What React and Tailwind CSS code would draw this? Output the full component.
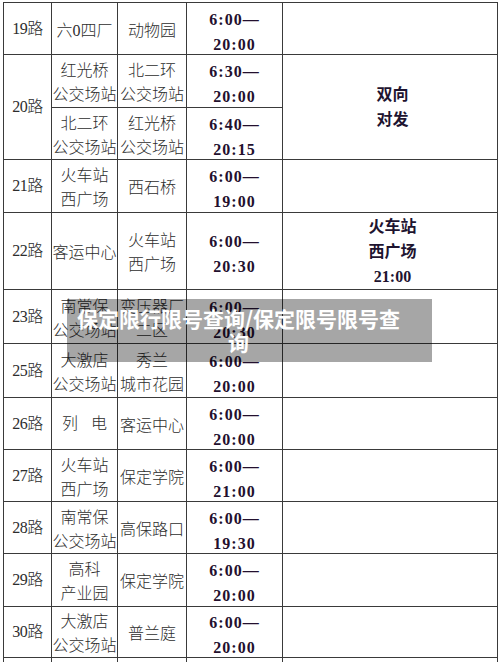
import React from "react";

const rows = [
  { no: "19路", from: ["六0四厂"], to: ["动物园"], time: ["6:00—", "20:00"], h: 52 },
  { no: "20路", from: ["红光桥", "公交场站"], to: ["北二环", "公交场站"], time: ["6:30—", "20:00"], h: 53, span: true, note: ["双向", "对发"] },
  { from: ["北二环", "公交场站"], to: ["红光桥", "公交场站"], time: ["6:40—", "20:15"], h: 52, sub: true },
  { no: "21路", from: ["火车站", "西广场"], to: ["西石桥"], time: ["6:00—", "19:00"], h: 53 },
  { no: "22路", from: ["客运中心"], to: ["火车站", "西广场"], time: ["6:00—", "20:30"], h: 77, note: ["火车站", "西广场", "21:00"] },
  { no: "23路", from: ["南常保", "公交场站"], to: ["变压器厂", "二区"], time: ["6:00—", "20:30"], h: 54 },
  { no: "25路", from: ["大激店", "公交场站"], to: ["秀兰", "城市花园"], time: ["6:00—", "20:00"], h: 54 },
  { no: "26路", from: ["列", "电"], spread: true, to: ["客运中心"], time: ["6:00—", "20:00"], h: 52 },
  { no: "27路", from: ["火车站", "西广场"], to: ["保定学院"], time: ["6:00—", "21:00"], h: 52 },
  { no: "28路", from: ["南常保", "公交场站"], to: ["高保路口"], time: ["6:00—", "19:30"], h: 52 },
  { no: "29路", from: ["高科", "产业园"], to: ["保定学院"], time: ["6:00—", "20:00"], h: 53 },
  { no: "30路", from: ["大激店", "公交场站"], to: ["普兰庭"], time: ["6:00—", "20:00"], h: 51 },
  { no: "31路", from: ["火车站", "西广场"], to: ["保定学院"], time: ["6:00—", "20:00"], h: 52 },
];

const cell = "border border-[#3a3a3a] p-0 text-center align-middle";

const Lines = ({ items }) => (
  <div className="flex flex-col items-center leading-[24px] translate-y-[2px]">
    {items.map((t, i) => (
      <span key={i} className="whitespace-nowrap">{t}</span>
    ))}
  </div>
);

const Time = ({ items }) => (
  <div
    className="flex flex-col items-center leading-[25px] translate-y-[3px] font-bold text-[16px] text-[#23102e] tracking-[1px]"
    style={{ fontFamily: '"Liberation Serif", serif' }}
  >
    {items.map((t, i) => (
      <span key={i} className="whitespace-nowrap">{t}</span>
    ))}
  </div>
);

export default function App() {
  return (
    <div
      className="relative h-[662px] w-[500px] overflow-hidden bg-white text-[16px] font-light text-[#2d2d2d]"
      style={{ fontFamily: '"Liberation Serif", "Noto Sans CJK SC", sans-serif' }}
    >
      <table className="mt-[2px] ml-[3px] border-collapse table-fixed w-[494px]">
        <colgroup>
          <col className="w-[48px]" />
          <col className="w-[66px]" />
          <col className="w-[69px]" />
          <col className="w-[96px]" />
          <col className="w-[215px]" />
        </colgroup>
        <tbody>
          {rows.map((r, i) => (
            <tr key={i} style={{ height: r.h }}>
              {!r.sub && (
                <td className={cell} rowSpan={r.span ? 2 : 1}>
                  <span className="tracking-[-0.5px]">{r.no}</span>
                </td>
              )}
              <td className={cell}>
                {r.spread ? (
                  <div className="flex justify-between px-[10px]">
                    <span>{r.from[0]}</span>
                    <span>{r.from[1]}</span>
                  </div>
                ) : (
                  <Lines items={r.from} />
                )}
              </td>
              <td className={cell}>
                <Lines items={r.to} />
              </td>
              <td className={cell}>
                <Time items={r.time} />
              </td>
              {!r.sub && (
                <td className={cell} rowSpan={r.span ? 2 : 1}>
                  {r.note && (
                    <div className="flex flex-col items-center leading-[25px] font-bold text-[#1e1430] pl-[5px]">
                      {r.note.map((t, k) => (
                        <span key={k}>{t}</span>
                      ))}
                    </div>
                  )}
                </td>
              )}
            </tr>
          ))}
        </tbody>
      </table>

      <div
        className="absolute left-[67px] top-[299px] w-[365px] h-[63px] bg-black/35 pl-[8px] pr-[30px] pt-[7px] text-center text-white font-bold text-[21px] leading-[24px]"
        style={{ fontFamily: '"Noto Sans CJK SC", sans-serif' }}
      >
        保定限行限号查询/保定限号限号查询
      </div>
    </div>
  );
}
